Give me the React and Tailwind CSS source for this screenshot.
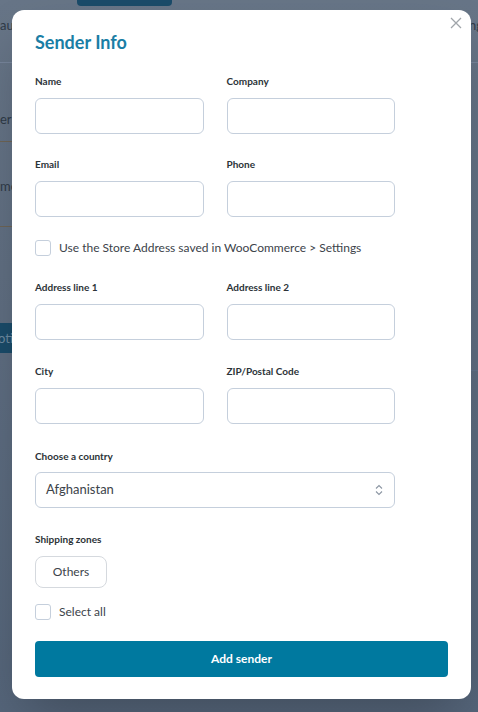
const Field = ({ label }) => (
  <div className="flex flex-col gap-[9px]">
    <label className="text-[10px] leading-4 font-bold text-[#2c3338]">{label}</label>
    <input className="w-full h-[36px] rounded-md border border-[#c5cfdc] bg-white px-3 text-sm outline-none" />
  </div>
);

const Checkbox = ({ label }) => (
  <label className="flex items-center gap-[8px] text-[12px] leading-4 text-[#3c434a]">
    <span className="w-4 h-4 rounded-[3px] border border-[#c5cfdc] bg-white"></span>
    <span>{label}</span>
  </label>
);

/** Backdrop page, dimmed by the overlay */
const Backdrop = () => (
  <div className="absolute inset-0 bg-gradient-to-b from-[#677587] to-[#55657a]">
    <div className="absolute left-[77px] top-0 w-[95px] h-[6px] rounded-b bg-[#1a4b69]"></div>
    <span className="absolute left-0 top-[16px] text-[13px] text-[#2f3a47]">au</span>
    <div className="absolute left-0 top-[62px] w-full h-px bg-[#76849a]"></div>
    <span className="absolute left-0 top-[110px] text-[13px] text-[#2f3a47]">er</span>
    <div className="absolute left-0 top-[141px] w-[12px] h-px bg-[#6d6455]"></div>
    <span className="absolute left-0 top-[177px] text-[13px] text-[#2f3a47]">me</span>
    <div className="absolute left-0 top-[226px] w-[12px] h-px bg-[#6d6455]"></div>
    <div className="absolute left-0 top-[323px] w-[12px] h-[30px] bg-[#1a4b69] overflow-hidden">
      <span className="text-[13px] leading-[30px] text-[#6d8aa0] -ml-[2px]">oti</span>
    </div>
    <span className="absolute left-[469px] top-[16px] text-[13px] text-[#2f3a47]">ng</span>
    <div className="absolute left-[12px] top-[370px] w-full h-px bg-[#62728a]"></div>
  </div>
);

export default function App() {
  return (
    <div className="relative w-[478px] h-[712px] overflow-hidden font-['Lato',sans-serif]">
      <Backdrop />
      <div className="relative pt-[10px] pl-[12px]">
        <div className="relative w-[459px] rounded-xl bg-white shadow-2xl px-[23px] pt-[18px] pb-[22px] flex flex-col">
          {/* Close */}
          <button className="absolute right-[9px] top-[7px] text-[#a0a5aa]">
            <svg width="12" height="12" viewBox="0 0 12 12" fill="none" stroke="currentColor" strokeWidth="1.3">
              <path d="M1 1l10 10M11 1L1 11" />
            </svg>
          </button>

          <h2 className="text-[18px] leading-7 font-bold text-[#1a7ea5]">Sender Info</h2>

          <div className="w-[360px] grid grid-cols-2 gap-x-[23px] gap-y-[22px] mt-[17px]">
            <Field label="Name" />
            <Field label="Company" />
            <Field label="Email" />
            <Field label="Phone" />
          </div>

          <div className="mt-[23px]">
            <Checkbox label="Use the Store Address saved in WooCommerce > Settings" />
          </div>

          <div className="w-[360px] grid grid-cols-2 gap-x-[23px] gap-y-[23px] mt-[23px]">
            <Field label="Address line 1" />
            <Field label="Address line 2" />
            <Field label="City" />
            <Field label="ZIP/Postal Code" />
          </div>

          <div className="w-[360px] mt-[24px] flex flex-col gap-[8px]">
            <label className="text-[10px] leading-4 font-bold text-[#2c3338]">Choose a country</label>
            <div className="h-[36px] rounded-md border border-[#c5cfdc] flex items-center justify-between pl-[10px] pr-[11px]">
              <span className="text-[13px] text-[#3c434a]">Afghanistan</span>
              <svg width="8" height="12" viewBox="0 0 8 12" fill="none" stroke="#8c96a3" strokeWidth="1.1">
                <path d="M1 4.5l3-3 3 3M1 7.5l3 3 3-3" />
              </svg>
            </div>
          </div>

          <div className="mt-[23px] flex flex-col items-start gap-[9px]">
            <label className="text-[10px] leading-4 font-bold text-[#2c3338]">Shipping zones</label>
            <button className="w-[72px] h-[32px] rounded-lg border border-[#d5d9de] text-[12px] text-[#3c434a]">Others</button>
          </div>

          <div className="mt-[16px]">
            <Checkbox label="Select all" />
          </div>

          <button className="mt-[21px] w-full h-[36px] rounded bg-[#00799f] text-white text-[12px] font-bold">Add sender</button>
        </div>
      </div>
    </div>
  );
}
